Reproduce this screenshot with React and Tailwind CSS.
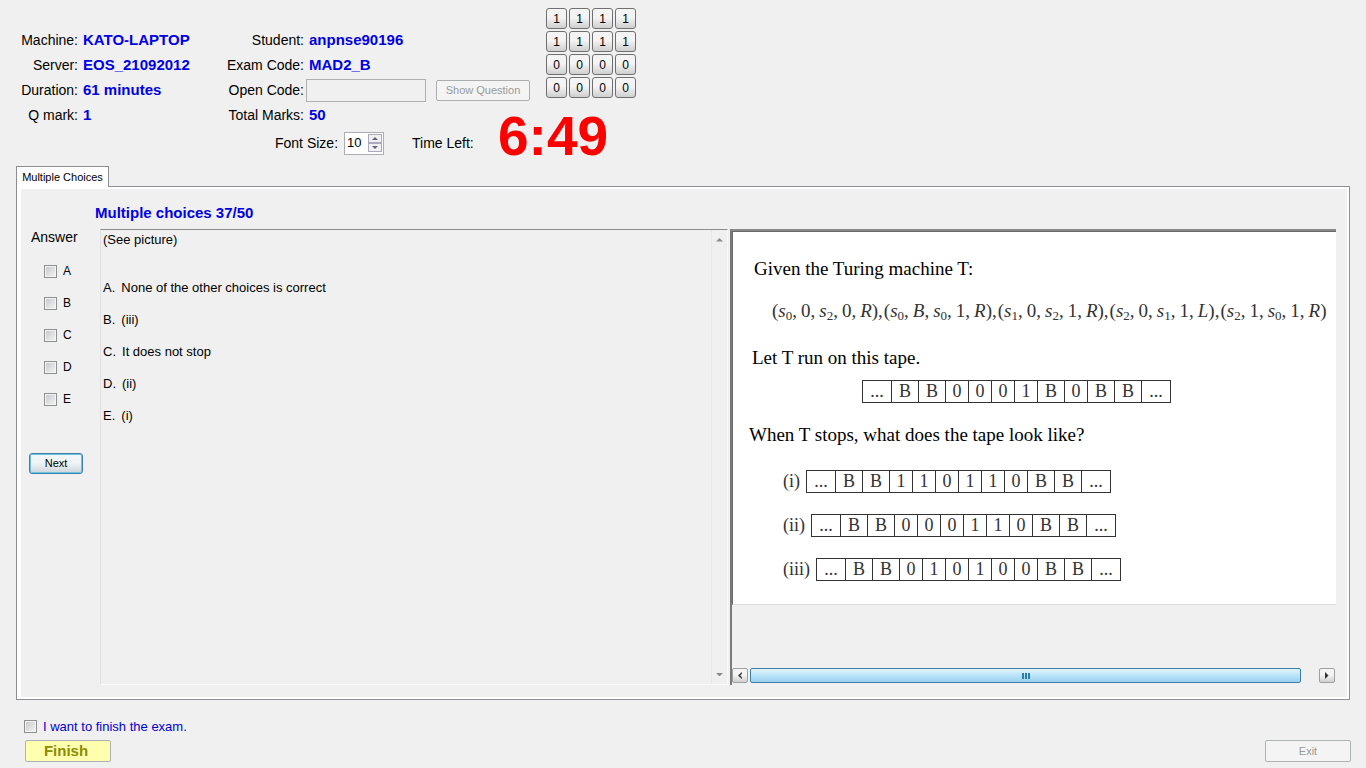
const topInfo = [
  ["Machine:", "KATO-LAPTOP"],
  ["Server:", "EOS_21092012"],
  ["Duration:", "61 minutes"],
  ["Q mark:", "1"],
];

const keypad = [1, 1, 1, 1, 1, 1, 1, 1, 0, 0, 0, 0, 0, 0, 0, 0];

const choices = [
  ["A", "None of the other choices is correct"],
  ["B", "(iii)"],
  ["C", "It does not stop"],
  ["D", "(ii)"],
  ["E", "(i)"],
];

const transitions = [
  ["0", "0", "2", "0", "R"],
  ["0", "B", "0", "1", "R"],
  ["1", "0", "2", "1", "R"],
  ["2", "0", "1", "1", "L"],
  ["2", "1", "0", "1", "R"],
];

const answers = [
  ["(i)", "BB110110BB"],
  ["(ii)", "BB000110BB"],
  ["(iii)", "BB010100BB"],
];

const raised = "bg-linear-to-b from-[#f4f4f4] from-45% to-[#cfcfcf]";

function Row({ label, children, labelWidth }) {
  return (
    <div className="flex h-[25px] items-center">
      <span className={`${labelWidth} shrink-0 text-right`}>{label}</span>
      {children}
    </div>
  );
}

function Value({ children }) {
  return <b className="ml-[5px] text-[15px] text-[#0000e6]">{children}</b>;
}

function Check({ id }) {
  return (
    <input
      id={id}
      type="checkbox"
      className="size-[13px] shrink-0 appearance-none border border-[#8e8f8f] bg-linear-to-br from-[#c4c6cc] to-[#f6f6f6] shadow-[inset_0_0_0_1px_#f4f4f4] checked:bg-[#3c7fb1]"
    />
  );
}

function Arrow({ dir, className }) {
  const d = { up: "M0 4 4 0 8 4Z", down: "M0 0 8 0 4 4Z" }[dir];
  return (
    <svg viewBox="0 0 8 4" className={className} aria-hidden="true">
      <path d={d} fill="currentColor" />
    </svg>
  );
}

function Letter({ v }) {
  return /[A-Z]/.test(v) ? <i>{v}</i> : <span>{v}</span>;
}

function State({ n }) {
  return (
    <span>
      <i>s</i>
      <sub className="bottom-[-3px] text-[13px]">{n}</sub>
    </span>
  );
}

function Transition({ t, last }) {
  return (
    <span className="flex items-baseline gap-1">
      <span>(<State n={t[0]} />,</span>
      <span><Letter v={t[1]} />,</span>
      <span><State n={t[2]} />,</span>
      <span>{t[3]},</span>
      <span><Letter v={t[4]} />){last ? "" : ","}</span>
    </span>
  );
}

function Tape({ cells }) {
  const all = ["...", ...cells.split(""), "..."];
  return (
    <table className="border-collapse text-center text-[18px] leading-[21px] text-[#333]">
      <tbody>
        <tr>
          {all.map((c, i) => (
            <td
              key={i}
              className={`h-[22px] border border-[#333] p-0 ${
                c === "..." ? "w-[29px]" : c === "B" ? "w-[27px]" : "w-[23px]"
              }`}
            >
              {c}
            </td>
          ))}
        </tr>
      </tbody>
    </table>
  );
}

export default function App() {
  return (
    <div className="flex min-h-screen flex-col bg-[#f0f0f0] font-['Liberation_Sans',Arial,sans-serif] text-[14px] text-black">
      <header className="flex h-[166px] items-start">
        <div className="w-[210px] shrink-0 pt-7">
          {topInfo.map(([l, v]) => (
            <Row key={l} label={l} labelWidth="w-[78px]">
              <Value>{v}</Value>
            </Row>
          ))}
        </div>
        <div className="w-[336px] shrink-0 pt-7">
          <Row label="Student:" labelWidth="w-[94px]">
            <Value>anpnse90196</Value>
          </Row>
          <Row label="Exam Code:" labelWidth="w-[94px]">
            <Value>MAD2_B</Value>
          </Row>
          <Row label={<label htmlFor="open">Open Code:</label>} labelWidth="w-[94px]">
            <input id="open" disabled className="ml-0.5 h-[23px] w-[120px] border border-[#b0b0b0] bg-[#f0f0f0] px-1" />
            <button disabled className="ml-2.5 h-[21px] w-[94px] rounded-[2px] border border-[#adadad] bg-[#f4f4f4] text-[11px] text-[#9a9a9a]">
              Show Question
            </button>
          </Row>
          <Row label="Total Marks:" labelWidth="w-[94px]">
            <Value>50</Value>
          </Row>
          <div className="flex h-[30px] items-center pl-[65px]">
            <label htmlFor="size">Font Size:</label>
            <div className="ml-1.5 flex h-[23px] w-10 items-center border border-[#abadb3] bg-white pr-px">
              <input id="size" defaultValue="10" className="w-[23px] bg-transparent pl-0.5 text-[13px] outline-none" />
              <div className="flex w-[14px] flex-col">
                <button aria-label="Increase" className="flex h-[9px] items-center justify-center border border-[#a9a9c0] bg-[#f0f0f0] text-[#62627a]">
                  <Arrow dir="up" className="w-[6px]" />
                </button>
                <button aria-label="Decrease" className="flex h-[9px] items-center justify-center border border-[#a9a9c0] bg-[#f0f0f0] text-[#62627a]">
                  <Arrow dir="down" className="w-[6px]" />
                </button>
              </div>
            </div>
            <span className="ml-7">Time Left:</span>
          </div>
        </div>
        <div className="pt-2">
          <div className="grid w-max grid-cols-4 gap-0.5">
            {keypad.map((k, i) => (
              <button key={i} className={`size-[21px] rounded-[3px] border border-[#707070] text-[12px] leading-none ${raised}`}>
                {k}
              </button>
            ))}
          </div>
          <div className="-ml-12 pt-2 text-[55px] leading-[60px] font-bold text-[#ff0000]">6:49</div>
        </div>
      </header>

      <main className="mx-4 flex flex-1 flex-col">
        <div role="tablist" className="flex">
          <button role="tab" aria-selected="true" className="relative -mb-px h-[21px] w-[93px] border border-b-0 border-[#8c8e94] bg-white text-[11px] whitespace-nowrap">
            Multiple Choices
          </button>
        </div>
        <section className="flex flex-1 flex-col border border-[#8c8e94] bg-white p-0.5 pl-1">
          <div className="flex flex-1 flex-col bg-[#f0f0f0] pb-3">
            <h1 className="pt-[15px] pl-[74px] text-[15px] leading-[18px] font-bold text-[#0000e6]">Multiple choices 37/50</h1>
            <div className="mt-[7px] flex flex-1 pr-[11px]">
              <div className="flex w-[79px] shrink-0 flex-col">
                <h2 className="pl-2.5 text-[14px] leading-4">Answer</h2>
                <div className="mt-2.5 flex flex-col">
                  {choices.map(([l]) => (
                    <div key={l} className="flex h-8 items-center gap-1.5 pl-[23px] text-[12px]">
                      <Check id={`answer-${l}`} />
                      <label htmlFor={`answer-${l}`}>{l}</label>
                    </div>
                  ))}
                </div>
                <button className="mt-[38px] ml-2 h-[21px] w-[54px] rounded-[3px] border border-[#3c7fb1] bg-linear-to-b from-[#f0f5f8] from-45% to-[#cdd5da] text-[11px] shadow-[inset_0_0_0_1px_#6cc4dc]">
                  Next
                </button>
              </div>
              <div className="grid flex-1 grid-cols-[630fr_606fr]">
                <div className="mr-0.5 flex border border-t-[#8c8c8c] border-r-[#f8f8f8] border-b-[#fafafa] border-l-[#e0e0e0]">
                  <div className="flex-1 pt-[2px] pl-0.5 text-[13px] leading-4">
                    <p>(See picture)</p>
                    <ul className="mt-8 flex flex-col gap-4">
                      {choices.map(([l, t]) => (
                        <li key={l} className="flex gap-1.5">
                          <span>{l}.</span>
                          <span>{t}</span>
                        </li>
                      ))}
                    </ul>
                  </div>
                  <div className="flex w-4 flex-col items-center justify-between border-l border-[#e6e6e6] py-2 text-[#8c8c8c]">
                    <Arrow dir="up" className="w-[7px]" />
                    <Arrow dir="down" className="w-[7px]" />
                  </div>
                </div>
                <div className="flex min-w-0 flex-col border-t-2 border-l-2 border-t-[#8a8a8a] border-l-[#7a7a7a]">
                  <div className="overflow-hidden border-t border-b border-l border-t-[#696969] border-b-[#dcdcdc] border-l-[#696969] bg-white pb-[23px] font-['Liberation_Serif','Times_New_Roman',serif] text-[19px] leading-6 whitespace-nowrap">
                    <p className="pt-[25px] pl-[21px]">Given the Turing machine T:</p>
                    <div className="mt-[18px] flex gap-px pl-[39px] text-[#333]">
                      {transitions.map((t, i) => (
                        <Transition key={i} t={t} last={i === transitions.length - 1} />
                      ))}
                    </div>
                    <p className="mt-[23px] pl-[19px]">Let T run on this tape.</p>
                    <div className="mt-[10px] pl-[129px]">
                      <Tape cells="BB0001B0BB" />
                    </div>
                    <p className="mt-5 pl-4">When T stops, what does the tape look like?</p>
                    <div className="mt-[22px] flex flex-col gap-5 pl-[50px] text-[18px] leading-6 text-[#333]">
                      {answers.map(([l, c]) => (
                        <div key={l} className="flex items-center gap-1.5">
                          <span>{l}</span>
                          <Tape cells={c} />
                        </div>
                      ))}
                    </div>
                  </div>
                  <div className="flex-1" />
                  <div className="mb-0.5 flex h-[15px] items-stretch gap-0.5 pr-px">
                    <button aria-label="Scroll left" className={`flex w-4 items-center justify-center rounded-[2px] border border-[#a0a0a0] ${raised}`}>
                      <svg viewBox="0 0 5 8" className="h-[7px]" aria-hidden="true"><path d="M4.500 0 0 4 4.500 8 4.500 6 2.500 4 4.500 2Z" fill="#333" /></svg>
                    </button>
                    <div className="flex flex-1 pr-4">
                      <div className="flex flex-1 items-center justify-center gap-px rounded-[2px] border border-[#3c7fa8] bg-linear-to-b from-[#e2f4fd] via-[#b9e3f7] to-[#9ad0ee]">
                        <i className="h-[6px] w-0.5 bg-[#2a7fa8]" />
                        <i className="h-[6px] w-0.5 bg-[#2a7fa8]" />
                        <i className="h-[6px] w-0.5 bg-[#2a7fa8]" />
                      </div>
                    </div>
                    <button aria-label="Scroll right" className={`flex w-4 items-center justify-center rounded-[2px] border border-[#a0a0a0] ${raised}`}>
                      <svg viewBox="0 0 4 8" className="h-[7px]" aria-hidden="true"><path d="M0 0 4 4 0 8Z" fill="#333" /></svg>
                    </button>
                  </div>
                </div>
              </div>
            </div>
          </div>
        </section>
      </main>

      <footer className="flex h-[68px] items-end justify-between pr-[15px] pb-1.5 pl-6">
        <div>
          <div className="flex h-[25px] items-center gap-1.5 text-[13px] text-[#0000d0]">
            <Check id="done" />
            <label htmlFor="done">I want to finish the exam.</label>
          </div>
          <button className="mt-px ml-px h-[22px] w-[86px] rounded-[2px] border border-[#adb2b5] bg-[#ffffb0] pr-1 text-[15px] leading-5 font-bold text-[#8c8c00]">
            Finish
          </button>
        </div>
        <button disabled className="h-[22px] w-[86px] rounded-[2px] border border-[#adb2b5] bg-[#f4f4f4] text-[11px] text-[#9a9a9a]">
          Exit
        </button>
      </footer>
    </div>
  );
}
